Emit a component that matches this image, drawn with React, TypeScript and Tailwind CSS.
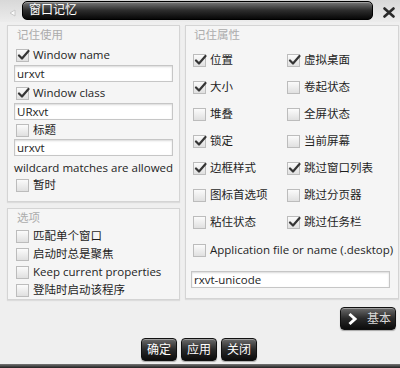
import React from "react";

const font = "font-['Open_Sans','Noto_Sans_CJK_SC',sans-serif]";

const Box = ({ checked }: { checked?: boolean }) => (
  <span className="relative w-[13px] h-[13px] shrink-0 border border-[#bcbcbc] bg-gradient-to-b from-[#fbfbfb] to-[#e0e0e0]">
    {checked && (
      <svg className="absolute left-[0px] top-[-1px]" width="13" height="12" viewBox="0 0 13 12">
        <path d="M2 6.5 L5 9.5 L11.5 2" fill="none" stroke="#353535" strokeWidth="2.2" strokeLinecap="round" strokeLinejoin="round" />
      </svg>
    )}
  </span>
);

const Check = ({ label, checked, className = "" }: { label: string; checked?: boolean; className?: string }) => (
  <div className={`flex items-center gap-[4px] h-[14px] ${className}`}>
    <Box checked={checked} />
    <span className="whitespace-nowrap leading-none">{label}</span>
  </div>
);

const Field = ({ value, className = "" }: { value: string; className?: string }) => (
  <div className={`h-[17px] bg-white border border-[#c6c6c6] shadow-[inset_0_1px_2px_rgba(0,0,0,0.15)] px-[2px] flex items-center leading-none ${className}`}>
    {value}
  </div>
);

const DarkButton = ({ children, className = "" }: { children: React.ReactNode; className?: string }) => (
  <div
    className={`flex items-center rounded-[4px] border border-[#111] bg-gradient-to-b from-[#6c6c6c] via-[#2a2a2a] to-[#0c0c0c] text-white shadow-[inset_0_1px_0_rgba(255,255,255,0.35),0_1px_1px_rgba(0,0,0,0.3)] ${className}`}
  >
    {children}
  </div>
);

const Group = ({ title, className = "", children }: { title: string; className?: string; children: React.ReactNode }) => (
  <div className={`border border-[#d4d4d4] bg-[#f5f5f5] shadow-[0_1px_1px_rgba(0,0,0,0.08)] ${className}`}>
    <div className="text-[#acacac] h-[16px] leading-[16px] pl-[3px] mt-[1px]">{title}</div>
    {children}
  </div>
);

const rightRows: [string, boolean, string, boolean][] = [
  ["位置", true, "虚拟桌面", true],
  ["大小", true, "卷起状态", false],
  ["堆叠", false, "全屏状态", false],
  ["锁定", true, "当前屏幕", false],
  ["边框样式", true, "跳过窗口列表", true],
  ["图标首选项", false, "跳过分页器", false],
  ["粘住状态", false, "跳过任务栏", true],
];

export default function App() {
  return (
    <div className={`w-[400px] h-[368px] bg-[#efefef] flex flex-col text-[11.5px] text-[#1e1e1e] ${font}`}>
      {/* title bar */}
      <div className="h-[22px] flex items-center bg-gradient-to-b from-[#d8d8d8] to-[#ececec]">
        <svg className="ml-[7px] mt-[3px]" width="10" height="10" viewBox="0 0 10 10">
          <path d="M8 2 L3 5 L8 8 Z" fill="#fafafa" stroke="#c8c8c8" strokeWidth="1" />
        </svg>
        <div className="ml-[5px] w-[351px] h-[19px] mt-[-2px] rounded-[5px] border border-[#000] bg-gradient-to-b from-[#7a7a7a] via-[#2c2c2c] to-[#080808] shadow-[inset_0_1px_0_rgba(255,255,255,0.3)] flex items-center pl-[6px] text-white text-[12px] leading-none">
          窗口记忆
        </div>
        <svg className="ml-[10px] mt-[2px]" width="12" height="11" viewBox="0 0 12 11">
          <path d="M1.5 1.5 L10.5 9.5 M10.5 1.5 L1.5 9.5" stroke="#2a2a2a" strokeWidth="2.6" strokeLinecap="round" />
        </svg>
      </div>

      {/* main */}
      <div className="flex gap-[5px] pl-[7px] pr-[5px] pt-[3px]">
        <div className="w-[173px] flex flex-col gap-[6px]">
          <Group title="记住使用" className="h-[177px] px-[6px]">
            <Check label="Window name" checked className="mt-[5px] ml-[2px]" />
            <Field value="urxvt" className="mt-[3px]" />
            <Check label="Window class" checked className="mt-[4px] ml-[2px]" />
            <Field value="URxvt" className="mt-[3px]" />
            <Check label="标题" className="mt-[3px] ml-[2px]" />
            <Field value="urxvt" className="mt-[2px]" />
            <div className="mt-[4px] h-[16px] leading-[16px] whitespace-nowrap">wildcard matches are allowed</div>
            <Check label="暂时" className="mt-[2px] ml-[2px]" />
          </Group>
          <Group title="选项" className="h-[92px] px-[6px]">
            <div className="flex flex-col gap-[4px] mt-[3px] ml-[2px]">
              <Check label="匹配单个窗口" />
              <Check label="启动时总是聚焦" />
              <Check label="Keep current properties" />
              <Check label="登陆时启动该程序" />
            </div>
          </Group>
        </div>

        <Group title="记住属性" className="flex-1 h-[274px] px-[5px]">
          <div className="flex flex-col gap-[13px] mt-[10px] ml-[2px]">
            {rightRows.map(([a, ac, b, bc]) => (
              <div key={a} className="flex">
                <Check label={a} checked={ac} className="w-[94px]" />
                <Check label={b} checked={bc} />
              </div>
            ))}
            <Check label="Application file or name (.desktop)" className="mt-[1px]" />
          </div>
          <Field value="rxvt-unicode" className="mt-[14px] mr-[3px]" />
        </Group>
      </div>

      {/* 基本 */}
      <div className="flex justify-end pr-[4px] mt-[7px]">
        <DarkButton className="w-[56px] h-[23px] justify-between pl-[6px] pr-[4px]">
          <svg width="11" height="14" viewBox="0 0 11 14">
            <path d="M2.5 2 L8 7 L2.5 12" fill="none" stroke="#fff" strokeWidth="3" strokeLinejoin="miter" />
          </svg>
          <span className="text-[#d8d8d8] text-[12px]">基本</span>
        </DarkButton>
      </div>

      {/* dialog buttons */}
      <div className="flex justify-center gap-[4px] mt-[8px] pr-[2px]">
        <DarkButton className="w-[36px] h-[23px] justify-center text-[12px]">确定</DarkButton>
        <DarkButton className="w-[36px] h-[23px] justify-center text-[12px]">应用</DarkButton>
        <DarkButton className="w-[36px] h-[23px] justify-center text-[12px]">关闭</DarkButton>
      </div>

      <div className="mt-auto h-[4px] bg-gradient-to-b from-[#777] to-[#222]" />
    </div>
  );
}
